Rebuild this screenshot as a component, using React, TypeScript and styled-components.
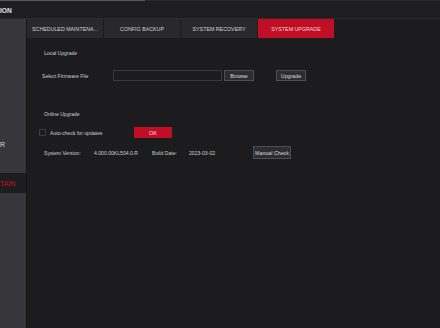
import React from 'react'
import styled, { createGlobalStyle } from 'styled-components'

const GlobalStyle = createGlobalStyle`
  html, body {
    margin: 0;
    padding: 0;
    background: #1c1c1e;
  }
  * {
    box-sizing: border-box;
  }
  body {
    font-family: 'Liberation Sans', Arial, sans-serif;
    color: #cfcfd1;
  }
`

const Page = styled.div`
  width: 440px;
  height: 328px;
  display: flex;
  flex-direction: column;
  overflow: hidden;
  background: #1c1c1e;
`
const TopEdge = styled.div`
  height: 1px;
  background: #2a2a2c;
  display: flex;
`
const TopEdgeMark = styled.div`
  width: 145px;
  background: #5a5a5d;
`
const Header = styled.div`
  height: 18px;
  display: flex;
  align-items: center;
  padding-top: 1px;
  background: #1e1e20;
  border-bottom: 1px solid #2c2c2e;
  font-size: 6.6px;
  font-weight: 600;
  color: #e6e6e8;
`
const Body = styled.div`
  flex: 1;
  display: flex;
  min-height: 0;
`
const Sidebar = styled.div`
  width: 27px;
  flex-shrink: 0;
  background: #37363b;
  border-right: 1px solid #141416;
  display: flex;
  flex-direction: column;
  padding-top: 115px;
  overflow: hidden;
`
const SideItem = styled.div<{ active?: boolean }>`
  height: 19.5px;
  display: flex;
  align-items: center;
  padding-top: 2px;
  font-size: 7px;
  white-space: nowrap;
  color: ${({ active }) => (active ? '#c4122a' : '#d8d8da')};
  background: ${({ active }) => (active ? '#1d1d1f' : 'transparent')};
`
const Main = styled.div`
  flex: 1;
  display: flex;
  flex-direction: column;
`
const Tabs = styled.div`
  height: 19px;
  display: flex;
  gap: 1px;
`
const Tab = styled.div<{ active?: boolean }>`
  width: 76px;
  display: flex;
  align-items: center;
  justify-content: center;
  font-size: 5.3px;
  white-space: nowrap;
  background: ${({ active }) => (active ? '#c20e25' : '#29292b')};
  color: ${({ active }) => (active ? '#f3d6da' : '#d2d2d4')};
`
const Panel = styled.div`
  display: flex;
  flex-direction: column;
  padding-top: 10px;
  font-size: 5.1px;
`
const SectionTitle = styled.div<{ gap: number }>`
  height: 10px;
  display: flex;
  align-items: center;
  padding-left: 17px;
  margin-top: ${({ gap }) => gap}px;
`
const Row = styled.div<{ gap: number; indent: number; h: number }>`
  display: flex;
  align-items: center;
  height: ${({ h }) => h}px;
  margin-top: ${({ gap }) => gap}px;
  padding-left: ${({ indent }) => indent}px;
  white-space: nowrap;
`
const Label = styled.span<{ w: number }>`
  width: ${({ w }) => w}px;
  flex-shrink: 0;
`
const FileInput = styled.div`
  width: 109px;
  height: 11px;
  border: 1px solid #3a3a3d;
  background: #1c1c1e;
`
const Button = styled.button<{ w: number; h?: number; ml?: number }>`
  width: ${({ w }) => w}px;
  height: ${({ h }) => h ?? 11}px;
  margin-left: ${({ ml }) => ml ?? 0}px;
  padding: 0;
  border: 1px solid #4e4e52;
  background: #2d2d30;
  color: #dcdcde;
  font-family: inherit;
  font-size: 5.3px;
  white-space: nowrap;
  flex-shrink: 0;
`
const RedButton = styled(Button)`
  border: none;
  background: #c20e25;
  color: #f5dde0;
  font-size: 5.5px;
`
const CheckBox = styled.div`
  width: 7px;
  height: 7px;
  border: 1px solid #3c3c3f;
  margin-right: 4px;
  flex-shrink: 0;
`

const App: React.FC = () => {
  return (
    <>
      <GlobalStyle />
      <Page>
        <TopEdge>
          <TopEdgeMark />
        </TopEdge>
        <Header>ION</Header>
        <Body>
          <Sidebar>
            <SideItem>R</SideItem>
            <SideItem />
            <SideItem active>TAIN</SideItem>
          </Sidebar>
          <Main>
            <Tabs>
              <Tab>SCHEDULED MAINTENA...</Tab>
              <Tab>CONFIG BACKUP</Tab>
              <Tab>SYSTEM RECOVERY</Tab>
              <Tab active>SYSTEM UPGRADE</Tab>
            </Tabs>
            <Panel>
              <SectionTitle gap={0}>Local Upgrade</SectionTitle>
              <Row gap={12} indent={15} h={11}>
                <Label w={71}>Select Firmware File</Label>
                <FileInput />
                <Button w={30} ml={2}>Browse</Button>
                <Button w={30} ml={22}>Upgrade</Button>
              </Row>
              <SectionTitle gap={28}>Online Upgrade</SectionTitle>
              <Row gap={8} indent={12} h={11}>
                <CheckBox />
                <Label w={84}>Auto-check for updates</Label>
                <RedButton w={38}>OK</RedButton>
              </Row>
              <Row gap={8} indent={17} h={13}>
                <Label w={50}>System Version:</Label>
                <Label w={58}>4.000.00KL504.0.R</Label>
                <Label w={37}>Build Date:</Label>
                <Label w={64}>2023-03-02</Label>
                <Button w={38} h={13}>Manual Check</Button>
              </Row>
            </Panel>
          </Main>
        </Body>
      </Page>
    </>
  )
}

export default App
